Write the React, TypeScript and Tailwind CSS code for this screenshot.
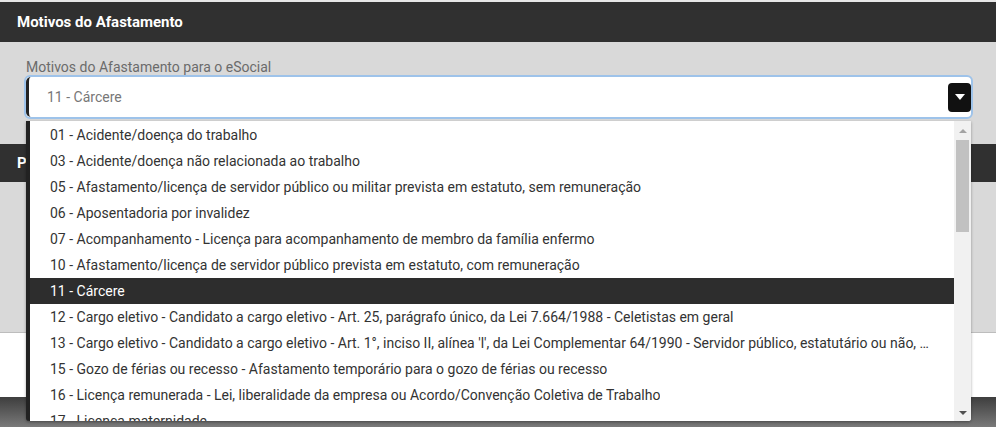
import React from "react";

const items = [
  "01 - Acidente/doença do trabalho",
  "03 - Acidente/doença não relacionada ao trabalho",
  "05 - Afastamento/licença de servidor público ou militar prevista em estatuto, sem remuneração",
  "06 - Aposentadoria por invalidez",
  "07 - Acompanhamento - Licença para acompanhamento de membro da família enfermo",
  "10 - Afastamento/licença de servidor público prevista em estatuto, com remuneração",
  "11 - Cárcere",
  "12 - Cargo eletivo - Candidato a cargo eletivo - Art. 25, parágrafo único, da Lei 7.664/1988 - Celetistas em geral",
  "13 - Cargo eletivo - Candidato a cargo eletivo - Art. 1°, inciso II, alínea 'l', da Lei Complementar 64/1990 - Servidor público, estatutário ou não, dos órgãos ou entidades da Administração Direta ou Indireta",
  "15 - Gozo de férias ou recesso - Afastamento temporário para o gozo de férias ou recesso",
  "16 - Licença remunerada - Lei, liberalidade da empresa ou Acordo/Convenção Coletiva de Trabalho",
  "17 - Licença maternidade",
];

export default function App() {
  const selected = "11 - Cárcere";
  return (
    <div className="relative w-[996px] h-[427px] overflow-hidden bg-white font-['Roboto','Liberation_Sans',sans-serif]">
      <div className="h-[2px] bg-[#e6e6e6]" />
      <div className="h-10 bg-[#303030] px-[17px] flex items-center text-white font-bold text-[15px]">Motivos do Afastamento</div>
      <div className="bg-[#d9d9d9] pl-6 pr-[23px] pt-[17px] pb-[25px]">
        <label className="block pl-[2px] text-[14px] leading-[16px] text-[#6b6b6b]">Motivos do Afastamento para o eSocial</label>
        <div className="h-[44px] rounded-[6px] border-2 border-[#9ec3ea] bg-white flex items-center">
          <div className="flex-1 h-full border-l-[3px] border-[#222] rounded-l-[5px] flex items-center pl-[18px] text-[14px] text-[#777]">{selected}</div>
          <button className="w-[23px] h-[29px] rounded-[4px] bg-[#111] flex items-center justify-center">
            <svg width="10" height="6" viewBox="0 0 10 6"><path d="M0 0h10L5 6z" fill="#fff" /></svg>
          </button>
        </div>
      </div>

      <div className="h-[38px] bg-[#303030] px-[17px] flex items-center text-white font-bold text-[15px]">Período</div>
      <div className="h-[151px] bg-[#d9d9d9] border-b border-[#bdbdbd]" />
      <div className="h-[64px] bg-white" />
      <div className="h-[30px] bg-gradient-to-b from-[#3e3e3e] to-[#7a7a7a]" />

      <div className="absolute left-[26px] top-[121px] w-[945px] h-[300px] bg-white border-l-4 border-[#222] rounded-b-[3px] shadow-[0_1px_3px_rgba(0,0,0,0.35)] flex overflow-hidden">
        <ul className="flex-1 min-w-0 pt-[1px]">
          {items.map((it) => (
            <li key={it} className={`h-[26px] pl-[20px] pr-[22px] flex items-center text-[14px] ${it === selected ? "bg-[#2d2d2d] text-white" : "text-[#333]"}`}>
              <span className="truncate">{it}</span>
            </li>
          ))}
        </ul>
        <div className="w-[17px] h-full bg-[#f1f1f1] relative flex flex-col items-center">
          <div className="h-[19px] flex items-center justify-center">
            <svg width="8" height="4" viewBox="0 0 8 4"><path d="M0 4h8L4 0z" fill="#a3a3a3" /></svg>
          </div>
          <div className="w-[13px] h-[92px] bg-[#c1c1c1]" />
          <div className="flex-1" />
          <div className="h-[17px] flex items-center justify-center">
            <svg width="8" height="4" viewBox="0 0 8 4"><path d="M0 0h8L4 4z" fill="#505050" /></svg>
          </div>
        </div>
      </div>
    </div>
  );
}
